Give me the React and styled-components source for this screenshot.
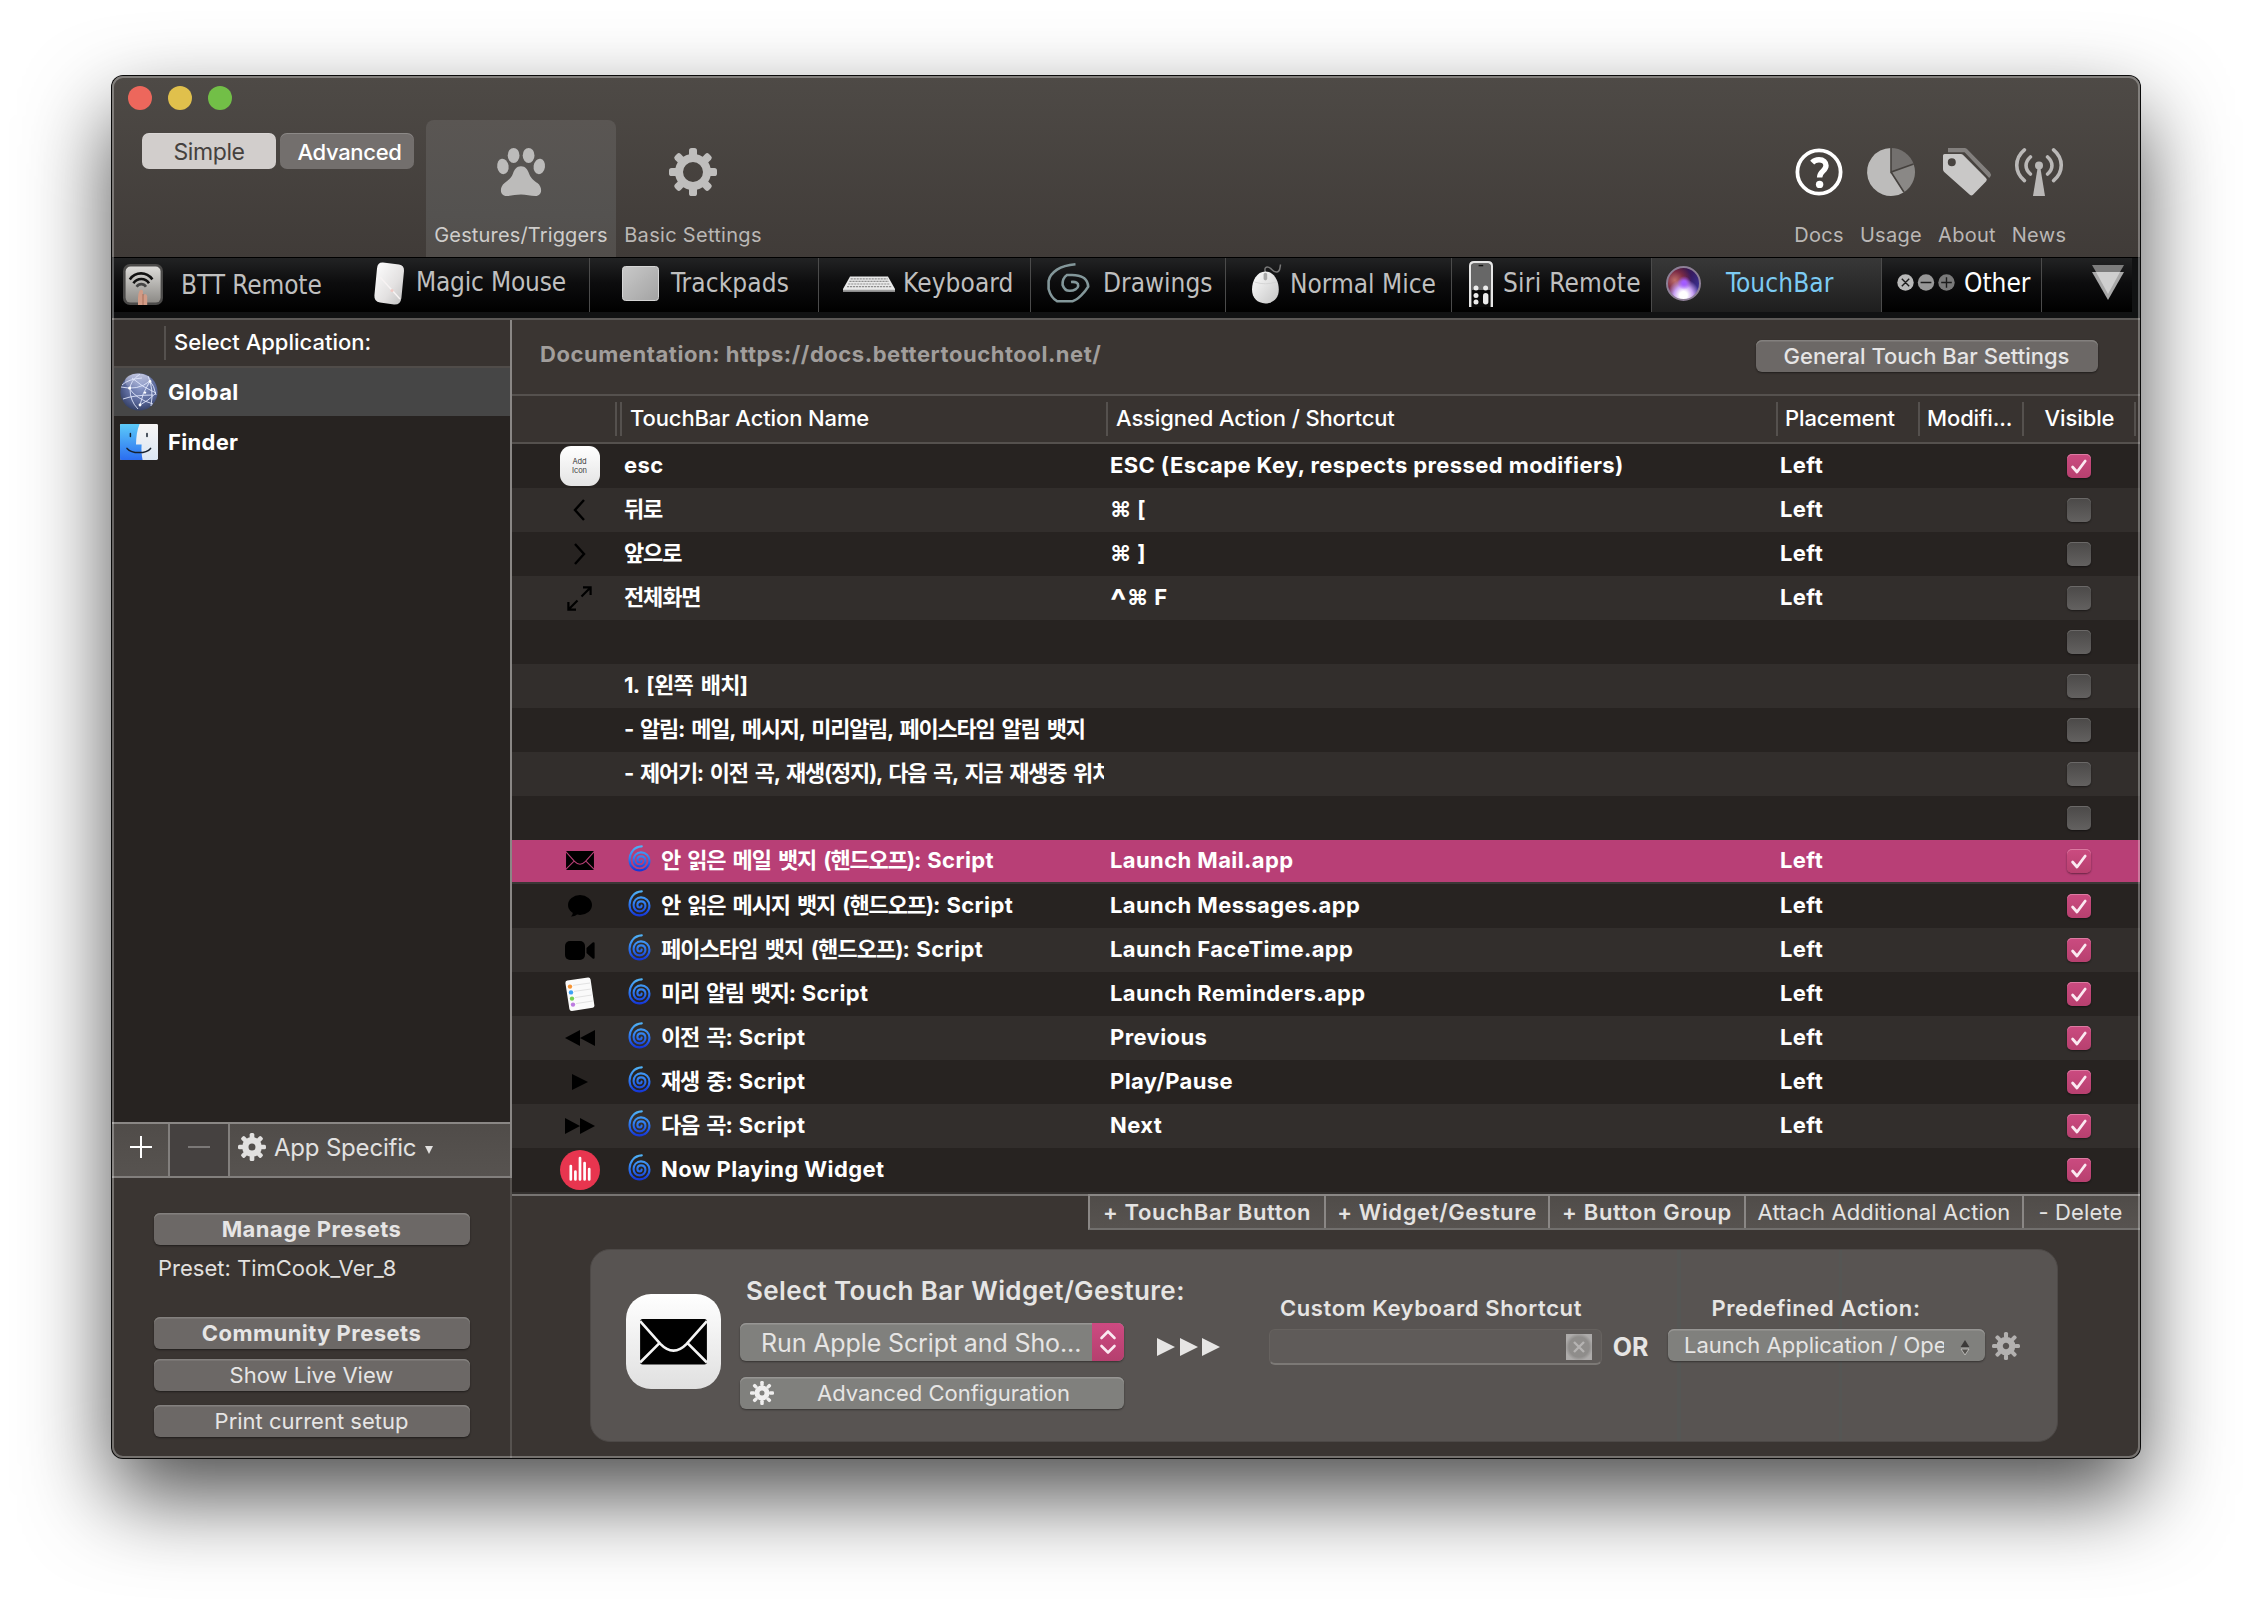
import React from 'react';
import styled, { createGlobalStyle, css } from 'styled-components';

const GlobalStyle = createGlobalStyle`
  html, body { margin: 0; background: #fff; }
  * { box-sizing: border-box; }
  svg { display: block; flex: none; overflow: visible; }
  button { border: 0; margin: 0; padding: 0; font: inherit; color: inherit; background: none; }
`;

/* ---------- window frame ---------- */

const Desktop = styled.div`
  width: 2252px;
  height: 1606px;
  padding: 76px 112px 0;
  overflow: hidden;
  background: #fff;
  font-family: Inter, 'Noto Sans CJK KR', sans-serif;
  font-size: 22px;
  line-height: 30px;
  color: #fff;
  white-space: pre;
`;

const Window = styled.div`
  position: relative;
  display: flex;
  flex-direction: column;
  width: 2028px;
  height: 1382px;
  border-radius: 11px;
  background: #3a3532;
  box-shadow: 0 0 0 1px #0a0a0a, 0 38px 86px rgba(0, 0, 0, 0.7);

  &::after {
    content: '';
    position: absolute;
    inset: 0;
    border: 2px solid rgba(255, 255, 255, 0.3);
    border-radius: 11px;
    pointer-events: none;
  }
`;

/* ---------- toolbar ---------- */

const Toolbar = styled.header`
  display: flex;
  height: 182px;
  border-bottom: 1px solid #000;
  border-radius: 11px 11px 0 0;
  background: linear-gradient(#4e4a46, #403b38);
`;

const ToolbarStart = styled.div`
  width: 314px;
  padding: 10px 0 0 16px;
`;

const Lights = styled.div`
  display: flex;
  gap: 16px;
`;

const Light = styled.span`
  width: 24px;
  height: 24px;
  border-radius: 50%;
  background: ${(p) => p.$color};
`;

const Segments = styled.div`
  display: flex;
  gap: 4px;
  padding: 23px 0 0 14px;
`;

const Segment = styled.button`
  width: 134px;
  height: 36px;
  padding: 2px 0 0 ${(p) => (p.$on ? 0 : 5)}px;
  border-radius: 7px;
  font-size: ${(p) => (p.$on ? 23 : 22)}px;
  letter-spacing: ${(p) => (p.$on ? -0.4 : -0.3)}px;
  font-weight: ${(p) => (p.$on ? 400 : 500)};
  color: ${(p) => (p.$on ? '#45413e' : '#fff')};
  background: ${(p) => (p.$on ? '#d2cecc' : '#736f6d')};
  box-shadow: inset 0 1px 0 rgba(255, 255, 255, 0.18);
`;

const ToolItem = styled.button`
  display: flex;
  flex-direction: column;
  align-items: center;
  width: ${(p) => p.$width}px;
  height: ${(p) => (p.$on ? 137 : 138)}px;
  margin-top: 44px;
  padding-top: 28px;
  border-radius: 8px 8px 0 0;
  background: ${(p) => (p.$on ? 'linear-gradient(#5a5653, #545250 70%, #524e4b)' : 'none')};
  font-size: 20px;
  letter-spacing: ${(p) => p.$ls || 0.3}px;
  color: ${(p) => (p.$on ? '#cfcdcb' : '#bab7b5')};
`;

const ToolLabel = styled.span`
  margin-top: 24px;
`;

const ToolSpacer = styled.div`
  flex: 1;
`;

const ToolEnd = styled.div`
  display: flex;
  padding-right: 69px;
`;

/* ---------- device strip ---------- */

const Strip = styled.nav`
  display: flex;
  height: 60px;
  padding-left: 2px;
  border-bottom: 6px solid #111213;
  background: #111213;
`;

const Device = styled.button`
  display: flex;
  align-items: center;
  width: ${(p) => p.$width}px;
  height: 54px;
  padding-left: ${(p) => p.$pad}px;
  padding-bottom: ${(p) => p.$lift ?? 4}px;
  gap: ${(p) => p.$gap}px;
  border-right: 1px solid ${(p) => (p.$plain ? 'transparent' : '#4b4b4b')};
  background: ${(p) => (p.$on ? 'linear-gradient(#383838, #1e1e1e)' : 'linear-gradient(#222324, #0d0d0e 45%, #000)')};
  background-clip: border-box;
  font-family: 'DejaVu Sans Condensed', 'DejaVu Sans', sans-serif;
  font-stretch: condensed;
  font-size: 26px;
  letter-spacing: ${(p) => p.$ls || 0}px;
  color: ${(p) => p.$color || '#bfbfbf'};
`;

const DeviceName = styled.span`
  padding-bottom: ${(p) => p.$raise}px;
`;

const Orb = styled.span`
  width: 35px;
  height: 35px;
  border-radius: 50%;
  border: 2px solid #8d7f96;
  background:
    radial-gradient(circle at 52% 48%, #a35cff 0 8%, transparent 30%),
    radial-gradient(circle at 50% 88%, #fff 0 12%, #c9a2f5 30%, transparent 52%),
    radial-gradient(circle at 22% 40%, #c0706a 0, #7b2b45 30%, transparent 55%),
    linear-gradient(120deg, #3b1226, #371b60 55%, #3b3aa8);
`;

/* ---------- body ---------- */

const Body = styled.div`
  display: flex;
  flex: 1;
  border-top: 2px solid #5c5957;
`;

const Sidebar = styled.aside`
  display: flex;
  flex-direction: column;
  width: 400px;
  border-right: 2px solid #56524f;
`;

const AppPane = styled.div`
  display: flex;
  flex-direction: column;
  width: 400px;
  height: 858px;
  padding-left: 2px;
  border-right: 2px solid #8a8785;
  background: #272321;
`;

const AppHead = styled.div`
  display: flex;
  align-items: center;
  height: 48px;
  padding-left: 50px;
  border-bottom: 2px solid #504c49;
  background: #383330;
  font-weight: 500;
`;

const AppHeadLabel = styled.span`
  height: 34px;
  padding-left: 8px;
  border-left: 2px solid #55514e;
  line-height: 32px;
`;

const AppRow = styled.div`
  display: flex;
  align-items: center;
  gap: 10px;
  height: ${(p) => p.$height}px;
  padding-left: 6px;
  background: ${(p) => (p.$on ? '#464646' : 'none')};
  font-weight: 700;
  letter-spacing: 0.3px;
`;

const AppBar = styled.div`
  display: flex;
  width: 398px;
  height: 56px;
  margin-top: auto;
  margin-left: -2px;
  border-top: 2px solid #8a8785;
  border-bottom: 2px solid #827f7d;
`;

const AppBarCell = styled.button`
  display: flex;
  align-items: center;
  justify-content: ${(p) => (p.$wide ? 'flex-start' : 'center')};
  flex: ${(p) => (p.$wide ? '1' : 'none')};
  width: ${(p) => p.$width || 0}px;
  padding: ${(p) => (p.$wide ? '0 0 6px 8px' : p.$off ? '0 0 7px' : '0 0 7px 2px')};
  border-right: ${(p) => (p.$wide ? 0 : 2)}px solid #827f7d;
  background: ${(p) => (p.$off ? '#454140' : 'linear-gradient(#504c49, #575350)')};
  font-size: 24px;
  letter-spacing: -0.2px;
  color: #e2e1e0;
`;

const AppBarText = styled.span`
  padding: 2px 9px 0 8px;
`;

const Caret = styled.span`
  padding-top: 5px;
`;

const Presets = styled.div`
  display: flex;
  flex-direction: column;
  padding: 35px 40px 0 42px;
`;

const PushButton = styled.button`
  height: 32px;
  width: ${(p) => (p.$width ? p.$width + 'px' : 'auto')};
  margin-top: ${(p) => p.$top || 0}px;
  padding-right: 1px;
  border-radius: 6px;
  background: #6c6866;
  box-shadow: inset 0 1.5px 0 #83807e, 0 1px 2px rgba(0, 0, 0, 0.45);
  color: #e6e5e5;
  line-height: 32px;
  font-weight: ${(p) => p.$weight || 400};
  letter-spacing: ${(p) => (p.$weight === 700 ? 0.45 : 0)}px;
`;

const PresetName = styled.div`
  height: 41px;
  padding: 8px 0 0 4px;
  color: #e2e0df;
`;

/* ---------- main ---------- */

const Main = styled.main`
  display: flex;
  flex-direction: column;
  flex: 1;
`;

const DocBar = styled.div`
  display: flex;
  align-items: flex-start;
  justify-content: space-between;
  height: 76px;
  padding: 20px 42px 0 28px;
  border-bottom: 2px solid #55514e;
  color: #a19e9c;
`;

const DocText = styled.span`
  font-weight: 700;
  letter-spacing: 0.55px;
  line-height: 28px;
`;

const HeadRow = styled.div`
  display: flex;
  align-items: center;
  height: 48px;
  border-bottom: 2px solid #55514e;
  background: #383330;
`;

const HeadCell = styled.div`
  width: ${(p) => p.$width}px;
  height: 34px;
  padding-left: ${(p) => p.$pad || 0}px;
  border-right: 2px solid #55514e;
  text-align: ${(p) => (p.$center ? 'center' : 'left')};
  line-height: 32px;
  font-weight: 500;
  letter-spacing: -0.12px;
`;

const Rows = styled.div`
  height: 752px;
  border-bottom: 2px solid #777472;
  background: #33302e;
`;

const Row = styled.div`
  display: grid;
  grid-template-columns: 112px 480px 676px 287px 24px;
  align-items: center;
  height: 44px;
  font-weight: 700;
  letter-spacing: 0.4px;
  background: ${(p) => (p.$odd ? '#322e2c' : '#272321')};
  ${(p) =>
    p.$selected &&
    css`
      background: #b83f76;
      border-bottom: 2px solid #3b3736;
    `}
`;

const IconCell = styled.div`
  display: flex;
  justify-content: center;
  padding-left: 23px;
`;

const NameCell = styled.div`
  display: flex;
  align-items: center;
  overflow: hidden;
  padding-left: ${(p) => (p.$script ? 4 : 0)}px;
  gap: 10px;
`;

const SwirlBox = styled.span`
  padding-bottom: 5px;
`;

const TextCell = styled.div`
  padding: 0 0 2px ${(p) => p.$pad || 0}px;
`;

const NameText = styled.span`
  padding-bottom: 2px;
`;

const Hangul = styled.span`
  letter-spacing: ${(p) => p.$ls ?? -1.15}px;
  word-spacing: ${(p) => p.$ws ?? 3.1}px;
`;

const ControlKey = styled.span`
  font-size: 34px;
  line-height: 0;
  vertical-align: -8px;
`;

const Check = styled.span`
  display: grid;
  place-items: center;
  width: 24px;
  height: 24px;
  border-radius: 5px;
  background: ${(p) => (p.$on ? 'linear-gradient(#cb4b80, #b7406f)' : 'linear-gradient(#4b4948, #636160)')};
  box-shadow: inset 0 1px 0 ${(p) => (p.$on ? '#dc7ba2' : '#6b6968')}, 0 1px 2px rgba(0, 0, 0, 0.45);
`;

const AddTile = styled.span`
  display: grid;
  place-items: center;
  width: 40px;
  height: 40px;
  border-radius: 11px;
  background: linear-gradient(#fff, #e4e4e4);
  color: #3a3a3a;
  font-size: 7.5px;
  font-weight: 400;
  line-height: 9px;
  text-align: center;
  letter-spacing: -0.1px;
`;

const ActionBar = styled.div`
  display: flex;
  align-self: flex-end;
  height: 36px;
  margin-top: -2px;
  border: solid #8a8785;
  border-width: 2px 0 2px 2px;
  border-bottom-color: #72706e;
  background: linear-gradient(#504c49, #575350);
`;

const ActionButton = styled.button`
  width: ${(p) => p.$width}px;
  padding-right: ${(p) => (p.$last ? 3 : 0)}px;
  border-right: ${(p) => (p.$last ? 0 : 2)}px solid #8a8785;
  font-weight: ${(p) => (p.$bold ? 600 : 400)};
  letter-spacing: ${(p) => (p.$bold ? 0.65 : 0.15)}px;
  line-height: 32px;
  color: #e4e3e2;
`;

/* ---------- editor panel ---------- */

const Editor = styled.section`
  display: flex;
  align-items: flex-start;
  width: 1468px;
  height: 193px;
  margin: 19px 0 0 78px;
  padding-left: 35px;
  border-radius: 20px;
  border: 1px solid #4d4947;
  background:
    linear-gradient(90deg, transparent 1086px, #555654 1086px 1090px, transparent 1090px 1248px, #555654 1248px 1251px, transparent 1251px),
    #585452;
  color: #e6e5e4;
`;

const Tile = styled.div`
  display: grid;
  place-items: center;
  width: 95px;
  height: 95px;
  margin-top: 44px;
  border-radius: 25px;
  background: linear-gradient(#fff, #e0e0e0);
`;

const Column = styled.div`
  display: flex;
  flex-direction: column;
  width: ${(p) => p.$width}px;
  margin: ${(p) => p.$top}px 0 0 ${(p) => p.$left}px;
`;

const Title = styled.h2`
  margin: 0;
  padding-left: 6px;
  font-size: 26px;
  line-height: 32px;
  font-weight: 600;
  letter-spacing: 0.38px;
`;

const FieldLabel = styled.div`
  padding-right: ${(p) => p.$shift}px;
  text-align: center;
  font-weight: 600;
  letter-spacing: 0.6px;
`;

const ControlBase = styled.div`
  display: flex;
  align-items: center;
  border-radius: 6px;
  background: #80807d;
  box-shadow: inset 0 1.5px 0 #979694, 0 1px 2px rgba(0, 0, 0, 0.4);
`;

const BigSelect = styled(ControlBase)`
  justify-content: space-between;
  height: 38px;
  margin-top: 16px;
  padding-left: 21px;
  overflow: hidden;
  font-size: 25px;
  letter-spacing: -0.12px;
`;

const BigSelectText = styled.span`
  padding-top: 1px;
`;

const Stepper = styled.span`
  display: grid;
  place-items: center;
  width: 32px;
  height: 38px;
  background: linear-gradient(#cd4a81, #b53f6e);
`;

const ConfigButton = styled(ControlBase)`
  height: 32px;
  margin-top: 16px;
  padding-left: 10px;
`;

const ConfigText = styled.span`
  padding-left: 43px;
`;

const Arrows = styled.div`
  margin: 88px 0 0 33px;
`;

const Recorder = styled.div`
  display: flex;
  align-items: center;
  justify-content: flex-end;
  height: 36px;
  margin-top: 6px;
  padding-right: 9px;
  border: 1px solid #66625f;
  border-bottom: 2px solid #7c7976;
  border-radius: 6px;
  background: #5f5b59;
`;

const Clear = styled.span`
  display: grid;
  place-items: center;
  width: 26px;
  height: 26px;
  background: radial-gradient(circle, #8f8d8b 55%, #adabaa 75%);
`;

const Or = styled.div`
  width: 66px;
  margin-top: 82px;
  padding-right: 9px;
  text-align: center;
  font-size: 25px;
  font-weight: 700;
`;

const Popup = styled(ControlBase)`
  justify-content: space-between;
  height: 32px;
  margin-top: 6px;
  padding: 0 15px 0 16px;
`;

const PopupText = styled.span`
  width: 260px;
  overflow: hidden;
`;

const PopupArrows = styled.span`
  padding-top: 5px;
`;

const GearButton = styled.button`
  margin: 82px 0 0 7px;
`;

/* ---------- drawings ---------- */

const Gear = ({ size, color, hole = 10, body = 18, tooth = 8 }) => (
  <svg width={size} height={size} viewBox="-24 -24 48 48">
    <circle r={(hole + body) / 2} fill="none" stroke={color} strokeWidth={body - hole} />
    {[0, 45, 90, 135, 180, 225, 270, 315].map((a) => (
      <rect key={a} x={-tooth / 2} y="-24" width={tooth} height="10" rx="2.6" fill={color} transform={`rotate(${a})`} />
    ))}
  </svg>
);

const Paw = () => (
  <svg width="48" height="48" viewBox="0 0 48 48" fill="#bcbbba">
    <ellipse cx="16.6" cy="7.4" rx="5.9" ry="7.5" />
    <ellipse cx="31.6" cy="7.4" rx="5.9" ry="7.5" />
    <ellipse cx="5.9" cy="18.4" rx="5.7" ry="7.8" transform="rotate(-8 5.9 18.4)" />
    <ellipse cx="42.3" cy="18.4" rx="5.7" ry="7.8" transform="rotate(8 42.3 18.4)" />
    <path d="M24 18.2C28.6 18.2 30.6 21.6 32 25.4C33.8 30.4 37 32.4 40.4 35C46 39.4 45.2 48 38.4 48C33.4 48 29 46.6 24 46.6C19 46.6 14.6 48 9.6 48C2.8 48 2 39.4 7.6 35C11 32.4 14.2 30.4 16 25.4C17.4 21.6 19.4 18.2 24 18.2Z" />
  </svg>
);

const Docs = () => (
  <svg width="48" height="48" viewBox="0 0 48 48" fill="none" stroke="#fff">
    <circle cx="24" cy="24" r="21.6" strokeWidth="3.8" />
    <path d="M17.2 14.6C19 12.6 21.4 11.8 24 11.8C28.6 11.8 31 14.4 31 17.6C31 23.4 24.6 22.6 24.6 29.6" strokeWidth="5.4" />
    <circle cx="24.6" cy="36.4" r="3.7" fill="#fff" stroke="none" />
  </svg>
);

const Usage = () => (
  <svg width="48" height="48" viewBox="0 0 48 48">
    <path d="M24 24L37 44.2A24 24 0 1 1 24 0Z" fill="#bdbcbb" />
    <path d="M24 24V0A24 24 0 0 1 46.6 16Z" fill="#73706e" />
    <path d="M24 24L46.6 16A24 24 0 0 1 37 44.2Z" fill="#8a8886" />
    <path d="M24 0V24L46.6 16M24 24L37 44.2" fill="none" stroke="#45413e" strokeWidth="1.6" />
  </svg>
);

const About = () => (
  <svg width="48" height="48" viewBox="0 0 48 48">
    <path d="M5 0H21.5Q23 0 24 1L47 24.4Q48.6 26.4 47.4 28.4L46.2 30L21.6 4.2H5Z" fill="#83807e" />
    <path
      d="M0 7.6Q0 6 1.6 6H17.6Q19.2 6 20.4 7.2L43 30Q44.6 31.6 43.2 33.2L30 46.8Q28.4 48.4 26.8 46.8L1.2 24Q0 22.8 0 21.2ZM8.8 10.3A4 4 0 1 0 8.8 18.3A4 4 0 1 0 8.8 10.3Z"
      fill="#c9c8c7"
      fillRule="evenodd"
    />
  </svg>
);

const News = () => (
  <svg width="48" height="48" viewBox="0 0 48 48" fill="none" stroke="#bab8b7" strokeWidth="3.6" strokeLinecap="round">
    <path d="M9.4 1.8C-0.8 10.4 -0.8 24 9.4 32.6M38.6 1.8C48.8 10.4 48.8 24 38.6 32.6M15.4 9C9.6 14 9.6 21 15.4 26M32.6 9C38.4 14 38.4 21 32.6 26" />
    <circle cx="24" cy="17.6" r="4" fill="#bab8b7" stroke="none" />
    <path d="M22.6 20H25.4L30 48H18Z" fill="#bab8b7" stroke="none" />
  </svg>
);

const RemoteIcon = () => (
  <svg width="40" height="41" viewBox="0 0 40 41">
    <defs>
      <linearGradient id="rm" x1="0" y1="0" x2="0" y2="1"><stop offset="0" stopColor="#dcdbd8" /><stop offset="1" stopColor="#8c8a86" /></linearGradient>
    </defs>
    <rect width="40" height="41" rx="7" fill="#4b4a49" />
    <rect x="2.6" y="2.6" width="35" height="36" rx="5" fill="url(#rm)" />
    <g fill="none" stroke="#111" strokeWidth="2.6">
      <path d="M6.8 15.4C12.6 7.4 23.4 7.4 29.4 15.4" />
      <path d="M10.4 19.2C14.2 13.6 22.4 13.6 26 19.2" />
      <path d="M13.6 22.8C16 19.2 20.6 19.2 23 22.8" stroke="#444" />
    </g>
    <path d="M15 41V34Q15 30 16.4 27Q18.6 24 20 27V32Q22.6 28 24.2 32V41Z" fill="#d19b86" />
    <path d="M20 30V41" stroke="#a56c58" strokeWidth="1" />
  </svg>
);

const MagicMouse = () => (
  <svg width="31" height="43" viewBox="0 0 31 43">
    <defs>
      <linearGradient id="mm" x1="0" y1="0" x2="1" y2="1"><stop offset="0" stopColor="#fff" /><stop offset="0.6" stopColor="#e3e1e1" /><stop offset="1" stopColor="#bfbfbf" /></linearGradient>
    </defs>
    <path d="M9 0.6L25 2.6Q30.4 3.4 30 9L27.4 36Q26.6 43 20 42.6L6 40.4Q0 39.6 0.4 33.4L3 6.4Q3.6 0.2 9 0.6Z" fill="url(#mm)" />
    <path d="M6 15L26 37" stroke="#f7f3f3" strokeWidth="1.4" />
    <circle cx="18" cy="28.6" r="1.5" fill="#f0c9c4" />
  </svg>
);

const Trackpad = () => (
  <svg width="37" height="35" viewBox="0 0 37 35">
    <defs>
      <linearGradient id="tp" x1="0" y1="0" x2="1" y2="1"><stop offset="0" stopColor="#c9c9c9" /><stop offset="1" stopColor="#a3a3a3" /></linearGradient>
    </defs>
    <rect x="0.5" y="0.5" width="36" height="34" rx="3" fill="url(#tp)" stroke="#d5d5d5" />
  </svg>
);

const KeyboardIcon = () => (
  <svg width="52" height="16" viewBox="0 0 52 16">
    <path d="M7 0.6H45L52 13V15.6H0V13Z" fill="#e9e9e9" />
    <path d="M7.6 2.8H44.6M6.4 5.4H45.8M5.2 8H47M4 10.6H48.4" stroke="#8f8f8f" strokeWidth="1.2" strokeDasharray="2.2 0.8" />
    <path d="M0 14.6H52" stroke="#9d9d9d" strokeWidth="1.6" />
  </svg>
);

const DrawingIcon = () => (
  <svg width="43" height="40" viewBox="0 0 43 40">
    <path
      d="M28.5 1.2C20 2 14 4 10 6.6C5 10 2 15 1.6 18V26C3 31 6 36 10 38.2H25.5C31 36.6 38 29 41.2 23.6C41 20 39.4 17 37 15C33 12.6 29 12 25 12H20C17 14 15.4 18 15.6 22C17 26 19.6 28 23 27.8C27 27.8 31 25.6 31.2 23C31.4 20 29 18.4 24 19"
      fill="none"
      stroke="#83979a"
      strokeWidth="2.6"
    />
  </svg>
);

const MouseIcon = () => (
  <svg width="29" height="40" viewBox="0 0 29 40">
    <defs>
      <linearGradient id="nm" x1="0" y1="0" x2="1" y2="1"><stop offset="0" stopColor="#fff" /><stop offset="1" stopColor="#c4c4c4" /></linearGradient>
    </defs>
    <path d="M13.4 8C12 4 14 2.4 17 3.4C20 4.6 20.6 8.6 25 8C28.6 7.2 27.6 3.6 28.6 0.6" fill="none" stroke="#777" strokeWidth="1.5" />
    <path d="M13.4 7.6C22 7.6 26.8 17 26.8 25.6C26.8 34 21.4 39.4 13.4 39.4C5.4 39.4 0 34 0 25.6C0 17 4.8 7.6 13.4 7.6Z" fill="url(#nm)" />
    <path d="M2.6 18Q13.4 21.6 24.2 18" fill="none" stroke="#d0d0d0" strokeWidth="0.8" />
    <rect x="11.6" y="8.8" width="3.6" height="7.6" rx="1.8" fill="#a9a9a9" />
  </svg>
);

const SiriRemote = () => (
  <svg width="24" height="46" viewBox="0 0 24 46">
    <path d="M1.2 46V5Q1.2 1.2 5 1.2H19Q22.8 1.2 22.8 5V46" fill="#0a0a0a" stroke="#e6e6e6" strokeWidth="2.4" />
    <path d="M2.4 29V5Q2.4 2.4 5 2.4H19Q21.6 2.4 21.6 5V29Z" fill="#676767" />
    <path d="M9.6 4.6H14.2" stroke="#111" strokeWidth="1.4" />
    <g fill="#ececec">
      <circle cx="7" cy="27" r="2.5" /><circle cx="16.6" cy="27" r="2.5" />
      <circle cx="7" cy="34.4" r="2.5" /><circle cx="7" cy="41" r="2.5" />
      <rect x="14" y="32" width="5.4" height="11.4" rx="2.7" />
    </g>
  </svg>
);

const OtherIcon = () => (
  <svg width="58" height="17" viewBox="0 0 58 17">
    <circle cx="8.5" cy="8.5" r="8.2" fill="#b9b9b9" /><circle cx="29" cy="8.5" r="8.2" fill="#989898" /><circle cx="49.5" cy="8.5" r="8.2" fill="#7a7a7a" />
    <path d="M4.8 4.8L12.2 12.2M12.2 4.8L4.8 12.2M23.6 8.5H34.4M44.2 8.5H54.8M49.5 3.2V13.8" stroke="#1c1c1c" strokeWidth="1.4" />
  </svg>
);

const MoreIcon = () => (
  <svg width="32" height="35" viewBox="0 0 32 35">
    <path d="M0 0H32L16 28Z" fill="#7c7c7c" />
    <path d="M0 7H32L16 35Z" fill="#a9a9a9" />
    <path d="M4 7H28L16 29Z" fill="#cfcfcf" />
  </svg>
);

const Globe = () => (
  <svg width="38" height="38" viewBox="0 0 38 38">
    <defs>
      <radialGradient id="gl" cx="0.55" cy="0.35" r="0.7"><stop offset="0" stopColor="#8d9bca" /><stop offset="0.6" stopColor="#596799" /><stop offset="1" stopColor="#2f3a5e" /></radialGradient>
      <linearGradient id="gh" x1="0" y1="0" x2="0" y2="1"><stop offset="0" stopColor="#d9dcf2" stopOpacity="0.8" /><stop offset="1" stopColor="#d9dcf2" stopOpacity="0" /></linearGradient>
    </defs>
    <circle cx="19" cy="19" r="18.6" fill="url(#gl)" />
    <ellipse cx="18" cy="8.5" rx="13" ry="8" fill="url(#gh)" />
    <g fill="none" stroke="#dfe5fb" strokeWidth="0.9">
      <path d="M1 14Q18 18 30 8Q34 12 36 22M20 1Q10 8 10 16Q10 28 18 36M30 8Q22 20 20 32M9 15Q16 26 33 31M28 3Q34 16 31 33M12 5Q22 14 36 20M3 26Q14 22 33 22M20 32Q28 28 36 20M2 12Q8 6 22 5" />
    </g>
    <g fill="#fff"><circle cx="9.6" cy="15" r="1.5" /><circle cx="30" cy="8.4" r="1.4" /><circle cx="25" cy="19.6" r="1.2" /><circle cx="20" cy="32" r="1.4" /></g>
  </svg>
);

const FinderIcon = () => (
  <svg width="38" height="36" viewBox="0 0 38 36">
    <defs>
      <linearGradient id="fl" x1="0" y1="0" x2="0" y2="1"><stop offset="0" stopColor="#5ccbf9" /><stop offset="1" stopColor="#2b6df0" /></linearGradient>
      <linearGradient id="fr" x1="0" y1="0" x2="0" y2="1"><stop offset="0" stopColor="#f7f6f5" /><stop offset="1" stopColor="#dbe6f3" /></linearGradient>
    </defs>
    <rect width="38" height="36" rx="1.4" fill="url(#fr)" />
    <path d="M1.4 0H19.6C17 6 16.2 13 16 20.6H21.6C21.2 26 21.6 31 22.6 36H1.4Q0 36 0 34.6V1.4Q0 0 1.4 0Z" fill="url(#fl)" />
    <path d="M10.4 9.6V12.6M27 9.6V12.6M7 24.4C12 30 26 30 30.6 24.4" fill="none" stroke="#16212e" strokeWidth="1.5" strokeLinecap="round" />
  </svg>
);

const Envelope = ({ width, line }) => (
  <svg width={width} height={width * 0.68} viewBox="0 0 66 45">
    <rect width="66" height="45" rx="2.5" fill="#000" />
    <path d="M0 2L20 24.6Q33 38 46 24.6L66 2M0 43L19.6 23.4M66 43L46.4 23.4" fill="none" stroke={line} strokeWidth="2.6" />
  </svg>
);

const rowIcons = {
  add: <AddTile>{'Add\nIcon'}</AddTile>,
  back: <svg width="14" height="22" viewBox="0 0 14 22"><path d="M11 1L2 11L11 21" fill="none" stroke="#000" strokeWidth="2.4" /></svg>,
  forward: <svg width="14" height="22" viewBox="0 0 14 22"><path d="M2 1L11 11L2 21" fill="none" stroke="#000" strokeWidth="2.4" /></svg>,
  full: (
    <svg width="25" height="25" viewBox="0 0 25 25">
      <path d="M14.5 10.5L23.5 1.5M16 1.4H23.6V9M10.5 14.5L1.5 23.5M1.4 16V23.6H9" fill="none" stroke="#000" strokeWidth="2.2" />
    </svg>
  ),
  mail: <Envelope width={28} line="#b83f76" />,
  message: (
    <svg width="24" height="22" viewBox="0 0 24 22">
      <ellipse cx="12" cy="10" rx="12" ry="10" /><path d="M4 15Q6 19 2.8 21.6Q8 21.6 10 18Z" />
    </svg>
  ),
  video: <svg width="30" height="19" viewBox="0 0 30 19"><rect width="20" height="19" rx="5" /><path d="M21.5 7L27.6 1.6Q29.6 0.4 29.6 2.4V16.6Q29.6 18.6 27.6 17.4L21.5 12Z" /></svg>,
  reminders: (
    <svg width="31" height="35" viewBox="0 0 31 35">
      <path d="M3.4 3.4L24 0.4Q26.2 0.2 26.6 2.4L30.4 28.4Q30.6 30.4 28.6 30.8L8 34Q5.8 34.2 5.4 32L1.4 6Q1.2 3.8 3.4 3.4Z" fill="#fafafa" />
      <path d="M9 8.4L26 6M10 14.4L27 12M11 20.6L27.8 18M12 26.6L28.6 24" stroke="#e2e2e2" strokeWidth="1" />
      <circle cx="6" cy="9.6" r="2.2" fill="#f79433" /><circle cx="7" cy="15.4" r="2.2" fill="#3aa0f5" /><circle cx="8" cy="21.6" r="2.2" fill="#76cf50" /><circle cx="9" cy="27.6" r="2.2" fill="#bd7be0" />
    </svg>
  ),
  prev: <svg width="30" height="16" viewBox="0 0 30 16"><path d="M15 0V16L0 8ZM30 0V16L15 8Z" /></svg>,
  play: <svg width="16" height="16" viewBox="0 0 16 16"><path d="M0 0V16L16 8Z" /></svg>,
  next: <svg width="30" height="16" viewBox="0 0 30 16"><path d="M0 0V16L15 8ZM15 0V16L30 8Z" /></svg>,
  music: (
    <svg width="40" height="40" viewBox="0 0 40 40">
      <circle cx="20" cy="20" r="20" fill="#e8354f" />
      <path d="M10.8 16V29.4M15.4 21.6V29.4M20 8V29.4M24.6 13V29.4M29.2 19V29.4" stroke="#fff" strokeWidth="2.7" strokeLinecap="round" />
    </svg>
  ),
};

const Cyclone = () => (
  <svg width="23" height="27" viewBox="0 0 24 28">
    <defs>
      <linearGradient id="cy" x1="0" y1="0" x2="0" y2="1"><stop offset="0" stopColor="#4fb0f4" /><stop offset="0.5" stopColor="#2f7cf0" /><stop offset="1" stopColor="#1538d8" /></linearGradient>
    </defs>
    <path
      d="M14.4 1.4C6 1.8 1.6 8.5 1.6 15.5C1.6 22 6.5 26.4 12 26.4C18 26.4 22.4 21.8 22.4 16.4C22.4 11.2 18.5 7.6 13.5 7.6C9 7.6 5.8 11.2 5.8 15.6C5.8 19.6 8.8 22.2 12.2 22.2C15.7 22.2 18.2 19.5 18.2 16.6C18.2 13.6 16.2 11.8 13.6 11.8C11.2 11.8 9.8 13.6 9.8 15.6C9.8 17.4 11 18.2 12.3 18.2C13.4 18.2 14.2 17.4 14.2 16.2"
      fill="none"
      stroke="url(#cy)"
      strokeWidth="2.2"
      strokeLinecap="round"
    />
  </svg>
);

const CheckMark = () => (
  <svg width="16" height="15" viewBox="0 0 16 15">
    <path d="M1.6 8L6 13L14.2 2" fill="none" stroke="#fbe9f1" strokeWidth="2.8" strokeLinecap="round" strokeLinejoin="round" />
  </svg>
);

/* ---------- data ---------- */

const devices = [
  { name: 'BTT Remote', width: 243, pad: 9, gap: 18, icon: <RemoteIcon />, lift: 1, raise: 0, plain: true, ls: -0.1 },
  { name: 'Magic Mouse', width: 233, pad: 17, gap: 11, icon: <MagicMouse />, lift: 3, raise: 3, ls: -0.2 },
  { name: 'Trackpads', width: 229, pad: 32, gap: 12, icon: <Trackpad />, raise: 0, ls: 0.1 },
  { name: 'Keyboard', width: 212, pad: 24, gap: 8, icon: <KeyboardIcon />, lift: 3, raise: 1, ls: 0.1 },
  { name: 'Drawings', width: 195, pad: 16, gap: 13, icon: <DrawingIcon />, raise: 0 },
  { name: 'Normal Mice', width: 226, pad: 26, gap: 9, icon: <MouseIcon />, lift: 2, raise: 0 },
  { name: 'Siri Remote', width: 200, pad: 17, gap: 10, icon: <SiriRemote />, lift: 3, raise: 1, ls: 0.25 },
  { name: 'TouchBar', width: 230, pad: 14, gap: 25, icon: <Orb />, lift: 4, raise: 0, on: true, color: '#7ccbf3', ls: 0.1 },
  { name: 'Other', width: 160, pad: 15, gap: 9, icon: <OtherIcon />, lift: 5, raise: 0, color: '#fff' },
];

const rows = [
  { icon: 'add', name: 'esc', action: 'ESC (Escape Key, respects pressed modifiers)', left: true, on: true },
  { icon: 'back', hangul: '뒤로', action: '⌘ [', left: true },
  { icon: 'forward', hangul: '앞으로', action: '⌘ ]', left: true },
  { icon: 'full', hangul: '전체화면', action: <><ControlKey>^</ControlKey>⌘ F</>, left: true },
  {},
  { hangul: '1. [왼쪽 배치]', ls: -0.7 },
  { hangul: '- 알림: 메일, 메시지, 미리알림, 페이스타임 알림 뱃지', ls: -1.25 },
  { hangul: '- 제어기: 이전 곡, 재생(정지), 다음 곡, 지금 재생중 위치', ls: -1.25, ws: 2.9 },
  {},
  { icon: 'mail', script: true, hangul: '안 읽은 메일 뱃지 (핸드오프): ', name: 'Script', action: 'Launch Mail.app', left: true, on: true, selected: true },
  { icon: 'message', script: true, hangul: '안 읽은 메시지 뱃지 (핸드오프): ', name: 'Script', action: 'Launch Messages.app', left: true, on: true },
  { icon: 'video', script: true, hangul: '페이스타임 뱃지 (핸드오프): ', name: 'Script', action: 'Launch FaceTime.app', left: true, on: true, ls: -0.95 },
  { icon: 'reminders', script: true, hangul: '미리 알림 뱃지: ', name: 'Script', action: 'Launch Reminders.app', left: true, on: true, ls: -1.3 },
  { icon: 'prev', script: true, hangul: '이전 곡: ', name: 'Script', action: 'Previous', left: true, on: true },
  { icon: 'play', script: true, hangul: '재생 중: ', name: 'Script', action: 'Play/Pause', left: true, on: true },
  { icon: 'next', script: true, hangul: '다음 곡: ', name: 'Script', action: 'Next', left: true, on: true },
  { icon: 'music', script: true, name: 'Now Playing Widget', on: true },
];

const Tool = ({ icon, label, ...rest }) => (
  <ToolItem {...rest}>
    {icon}
    <ToolLabel>{label}</ToolLabel>
  </ToolItem>
);

export default function App() {
  return (
    <Desktop>
      <GlobalStyle />
      <Window>
        <Toolbar>
          <ToolbarStart>
            <Lights>
              <Light $color="#ed675c" />
              <Light $color="#e0c04c" />
              <Light $color="#72bf47" />
            </Lights>
            <Segments>
              <Segment $on>Simple</Segment>
              <Segment>Advanced</Segment>
            </Segments>
          </ToolbarStart>
          <Tool $on $width={190} $ls={0.15} icon={<Paw />} label="Gestures/Triggers" />
          <Tool $width={154} icon={<Gear size={48} color="#bfbebd" />} label="Basic Settings" />
          <ToolSpacer />
          <ToolEnd>
            <Tool $width={72} icon={<Docs />} label="Docs" />
            <Tool $width={72} icon={<Usage />} label="Usage" />
            <Tool $width={80} icon={<About />} label="About" />
            <Tool $width={64} icon={<News />} label="News" />
          </ToolEnd>
        </Toolbar>

        <Strip>
          {devices.map((d) => (
            <Device key={d.name} $width={d.width} $pad={d.pad} $gap={d.gap} $on={d.on} $color={d.color} $ls={d.ls} $plain={d.plain} $lift={d.lift}>
              {d.icon}
              <DeviceName $raise={d.raise}>{d.name}</DeviceName>
            </Device>
          ))}
          <Device $width={90} $pad={50} $gap={0} $plain $lift={6}>
            <MoreIcon />
          </Device>
        </Strip>

        <Body>
          <Sidebar>
            <AppPane>
              <AppHead>
                <AppHeadLabel>Select Application:</AppHeadLabel>
              </AppHead>
              <AppRow $on $height={48}>
                <Globe />
                Global
              </AppRow>
              <AppRow $height={52}>
                <FinderIcon />
                Finder
              </AppRow>
              <AppBar>
                <AppBarCell $width={58}>
                  <svg width="22" height="22" viewBox="0 0 22 22"><path d="M11 0V22M0 11H22" stroke="#fff" strokeWidth="2" /></svg>
                </AppBarCell>
                <AppBarCell $width={60} $off>
                  <svg width="22" height="22" viewBox="0 0 22 22"><path d="M0 11H22" stroke="#7b7877" strokeWidth="2" /></svg>
                </AppBarCell>
                <AppBarCell $wide>
                  <Gear size={28} color="#e2e1e0" hole={6} body={17} />
                  <AppBarText>App Specific</AppBarText>
                  <Caret>
                    <svg width="8" height="8" viewBox="0 0 8 8"><path d="M0 0H8L4 8Z" fill="#e2e1e0" /></svg>
                  </Caret>
                </AppBarCell>
              </AppBar>
            </AppPane>
            <Presets>
              <PushButton $weight={700}>Manage Presets</PushButton>
              <PresetName>Preset: TimCook_Ver_8</PresetName>
              <PushButton $weight={700} $top={31}>Community Presets</PushButton>
              <PushButton $top={10}>Show Live View</PushButton>
              <PushButton $top={14}>Print current setup</PushButton>
            </Presets>
          </Sidebar>

          <Main>
            <DocBar>
              <DocText>Documentation: https://docs.bettertouchtool.net/</DocText>
              <PushButton $width={342} $weight={500}>General Touch Bar Settings</PushButton>
            </DocBar>
            <HeadRow>
              <HeadCell $width={105} />
              <HeadCell $width={5} />
              <HeadCell $width={486} $pad={8}>TouchBar Action Name</HeadCell>
              <HeadCell $width={670} $pad={8}>Assigned Action / Shortcut</HeadCell>
              <HeadCell $width={142} $pad={7}>Placement</HeadCell>
              <HeadCell $width={104} $pad={7}>Modifi...</HeadCell>
              <HeadCell $width={112} $pad={1} $center>Visible</HeadCell>
            </HeadRow>
            <Rows>
              {rows.map((r, i) => (
                <Row key={i} $odd={i % 2 === 1} $selected={r.selected}>
                  <IconCell>{r.icon && rowIcons[r.icon]}</IconCell>
                  <NameCell $script={r.script}>
                    {r.script && (
                      <SwirlBox>
                        <Cyclone />
                      </SwirlBox>
                    )}
                    <NameText>
                      {r.hangul && <Hangul $ls={r.ls} $ws={r.ws}>{r.hangul}</Hangul>}
                      {r.name}
                    </NameText>
                  </NameCell>
                  <TextCell $pad={6}>{r.action}</TextCell>
                  <TextCell>{r.left ? 'Left' : ''}</TextCell>
                  <Check $on={r.on}>{r.on && <CheckMark />}</Check>
                </Row>
              ))}
            </Rows>
            <ActionBar>
              <ActionButton $bold $width={236}>+ TouchBar Button</ActionButton>
              <ActionButton $bold $width={224}>+ Widget/Gesture</ActionButton>
              <ActionButton $bold $width={196}>+ Button Group</ActionButton>
              <ActionButton $width={278}>Attach Additional Action</ActionButton>
              <ActionButton $last $width={116}>- Delete</ActionButton>
            </ActionBar>

            <Editor>
              <Tile>
                <Envelope width={67} line="#f4f4f4" />
              </Tile>
              <Column $width={384} $top={25} $left={19}>
                <Title>Select Touch Bar Widget/Gesture:</Title>
                <BigSelect>
                  <BigSelectText>Run Apple Script and Sho...</BigSelectText>
                  <Stepper>
                    <svg width="16" height="24" viewBox="0 0 16 24">
                      <path d="M1.5 8L8 1.5L14.5 8M1.5 16L8 22.5L14.5 16" fill="none" stroke="#fbe9f1" strokeWidth="2.6" strokeLinecap="round" strokeLinejoin="round" />
                    </svg>
                  </Stepper>
                </BigSelect>
                <ConfigButton>
                  <Gear size={24} color="#efeeee" hole={5} body={15} tooth={7} />
                  <ConfigText>Advanced Configuration</ConfigText>
                </ConfigButton>
              </Column>
              <Arrows>
                <svg width="64" height="18" viewBox="0 0 64 18"><path d="M0 0L18 9L0 18ZM23 0L41 9L23 18ZM45 0L63 9L45 18Z" fill="#e6e5e4" /></svg>
              </Arrows>
              <Column $width={333} $top={43} $left={48}>
                <FieldLabel $shift={9}>Custom Keyboard Shortcut</FieldLabel>
                <Recorder>
                  <Clear>
                    <svg width="12" height="12" viewBox="0 0 12 12"><path d="M1 1L11 11M11 1L1 11" stroke="#b5b3b2" strokeWidth="2.4" /></svg>
                  </Clear>
                </Recorder>
              </Column>
              <Or>OR</Or>
              <Column $width={317} $top={43} $left={0}>
                <FieldLabel $shift={21}>Predefined Action:</FieldLabel>
                <Popup>
                  <PopupText>Launch Application / Open</PopupText>
                  <PopupArrows>
                    <svg width="10" height="16" viewBox="0 0 10 16"><path d="M5 0L9.4 7H0.6Z" fill="#3c3a39" /><path d="M1 9L5 15L9 9Z" fill="#55534f" stroke="#c9c8c7" strokeWidth="0.8" /></svg>
                  </PopupArrows>
                </Popup>
              </Column>
              <GearButton>
                <Gear size={28} color="#b3b1b0" hole={5.5} body={16} tooth={7} />
              </GearButton>
            </Editor>
          </Main>
        </Body>
      </Window>
    </Desktop>
  );
}
